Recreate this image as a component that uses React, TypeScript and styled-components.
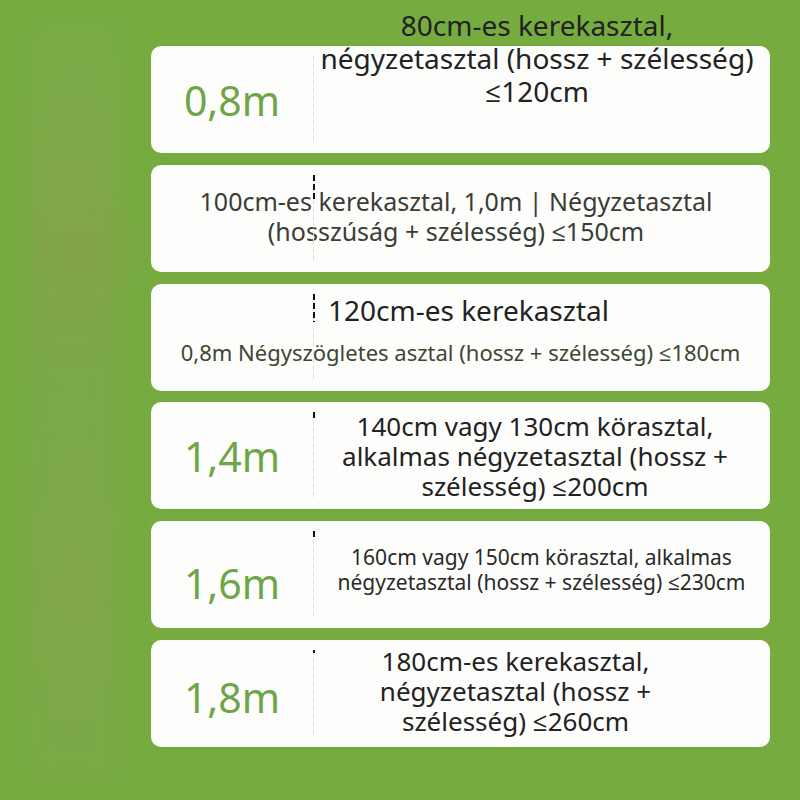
import styled, { createGlobalStyle } from "styled-components";

const GlobalStyle = createGlobalStyle`
  html, body {
    margin: 0;
    padding: 0;
    background: #76ab40;
  }
  body {
    font-family: "Noto Sans", "Open Sans", sans-serif;
  }
`;

type Row = {
  label?: string;
  labelDrop?: number;
  lines: string[];
  size: number;
  lineHeight: number;
  color: string;
  span?: boolean;
  lift?: number;
  padRight?: number;
  darkDash: number;
  firstIndent?: number;
  smallSecond?: number;
};

const rows: Row[] = [
  {
    label: "0,8m",
    lines: ["80cm-es kerekasztal,", "négyzetasztal (hossz + szélesség)", "≤120cm"],
    size: 28,
    lineHeight: 33,
    color: "#222",
    lift: 82,
    padRight: 9,
    darkDash: 0
  },
  {
    lines: ["100cm-es kerekasztal, 1,0m | Négyzetasztal", "(hosszúság + szélesség) ≤150cm"],
    size: 25,
    lineHeight: 30,
    color: "#3a3d36",
    span: true,
    lift: 4,
    padRight: 9,
    darkDash: 26
  },
  {
    lines: ["120cm-es kerekasztal", "0,8m Négyszögletes asztal (hossz + szélesség) ≤180cm"],
    size: 28,
    lineHeight: 42,
    color: "#222",
    span: true,
    lift: 12,
    darkDash: 28,
    firstIndent: 177,
    smallSecond: 22
  },
  {
    label: "1,4m",
    lines: ["140cm vagy 130cm körasztal,", "alkalmas négyzetasztal (hossz +", "szélesség) ≤200cm"],
    size: 26,
    lineHeight: 30,
    color: "#222",
    padRight: 13,
    darkDash: 8
  },
  {
    label: "1,6m",
    labelDrop: 16,
    lines: ["160cm vagy 150cm körasztal, alkalmas", "négyzetasztal (hossz + szélesség) ≤230cm"],
    size: 21,
    lineHeight: 25,
    color: "#2a2a2a",
    lift: 10,
    darkDash: 7
  },
  {
    label: "1,8m",
    labelDrop: 6,
    lines: ["180cm-es kerekasztal,", "négyzetasztal (hossz +", "szélesség) ≤260cm"],
    size: 26,
    lineHeight: 30,
    color: "#222",
    lift: 4,
    padRight: 52,
    darkDash: 3
  }
];

const App = () => {
  return (
    <>
      <GlobalStyle />
      <Page>
        <Haze />
        <List>
          {rows.map((row, i) => (
            <Card key={i}>
              <Divider $dark={row.darkDash} />
              {!row.span && <Label $drop={row.labelDrop || 0}>{row.label}</Label>}
              <Text
                $span={!!row.span}
                $size={row.size}
                $lh={row.lineHeight}
                $color={row.color}
                $lift={row.lift || 0}
                $padRight={row.padRight || 0}
              >
                {row.lines.map((line, j) =>
                  row.firstIndent && j === 0 ? (
                    <Indented key={j} $indent={row.firstIndent}>
                      {line}
                    </Indented>
                  ) : row.smallSecond && j === 1 ? (
                    <Small key={j} $size={row.smallSecond}>
                      {line}
                    </Small>
                  ) : (
                    <div key={j}>{line}</div>
                  )
                )}
              </Text>
            </Card>
          ))}
        </List>
      </Page>
    </>
  );
};

const Page = styled.div`
  position: relative;
  width: 800px;
  height: 800px;
  overflow: hidden;
  background: #76ab40;
`;

const Haze = styled.div`
  position: absolute;
  left: 30px;
  top: 20px;
  width: 90px;
  height: 760px;
  background: linear-gradient(
    to bottom,
    #79ab46 0%,
    #7fa94a 15%,
    #82a448 30%,
    #7aa948 50%,
    #80a74a 75%,
    #7aa946 100%
  );
  filter: blur(12px);
`;

const List = styled.div`
  position: relative;
  display: flex;
  flex-direction: column;
  gap: 11.8px;
  padding: 46px 0 0 151px;
`;

const Card = styled.div`
  position: relative;
  width: 619px;
  height: 107px;
  box-sizing: border-box;
  background: #fdfdfb;
  border-radius: 10px;
  display: grid;
  grid-template-columns: 162px 1fr;
  grid-template-rows: 100%;
  align-items: center;
`;

const Divider = styled.div<{ $dark: number }>`
  position: absolute;
  left: 162px;
  top: 10px;
  bottom: 10px;
  width: 1px;
  background: repeating-linear-gradient(to bottom, #dcdcdc 0 5px, transparent 5px 8px);
  &::before {
    content: "";
    position: absolute;
    left: 0;
    top: 0;
    width: 2px;
    height: ${props => props.$dark}px;
    background: repeating-linear-gradient(to bottom, #111 0 6px, transparent 6px 9px);
  }
`;

const Label = styled.div<{ $drop: number }>`
  text-align: center;
  font-size: 41px;
  color: #6ea548;
  line-height: 1;
  margin-top: ${props => 2 + props.$drop}px;
`;

const Text = styled.div<{
  $span: boolean;
  $size: number;
  $lh: number;
  $color: string;
  $lift: number;
  $padRight: number;
}>`
  grid-column: ${props => (props.$span ? "1 / -1" : "2")};
  text-align: center;
  white-space: nowrap;
  font-size: ${props => props.$size}px;
  line-height: ${props => props.$lh}px;
  color: ${props => props.$color};
  margin-bottom: ${props => props.$lift}px;
  padding-right: ${props => props.$padRight}px;
`;

const Indented = styled.div<{ $indent: number }>`
  text-align: left;
  padding-left: ${props => props.$indent}px;
`;

const Small = styled.div<{ $size: number }>`
  font-size: ${props => props.$size}px;
  color: #3c4732;
`;

export default App;
